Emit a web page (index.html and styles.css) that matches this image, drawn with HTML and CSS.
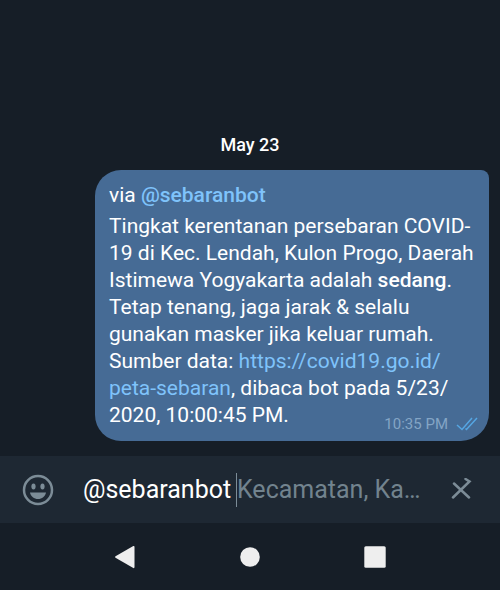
FILE: index.html
```html
<!DOCTYPE html>
<html lang="id">
<head>
<meta charset="utf-8">
<meta name="viewport" content="width=device-width, initial-scale=1">
<title>Chat</title>
<link rel="stylesheet" href="styles.css">
</head>
<body>
<main class="chat">
  <time class="date" datetime="2020-05-23">May 23</time>
  <article class="bubble">
    <p class="via">via <a class="bot" href="#sebaranbot">@sebaranbot</a></p>
    <p class="message">Tingkat kerentanan persebaran COVID-<br>19 di Kec. Lendah, Kulon Progo, Daerah<br>Istimewa Yogyakarta adalah <strong>sedang</strong>.<br>Tetap tenang, jaga jarak &amp; selalu<br>gunakan masker jika keluar rumah.<br>Sumber data: <a href="https://covid19.go.id/peta-sebaran">https://covid19.go.id/<br>peta-sebaran</a>, dibaca bot pada 5/23/<br>2020, 10:00:45 PM.</p>
    <div class="status">
      <time datetime="22:35">10:35 PM</time>
      <svg class="ticks" viewBox="0 0 22 14" aria-hidden="true"><path d="M1 8l5 4.500L16 1M9.500 11.500l1 1L21 1"/></svg>
    </div>
  </article>
</main>
<form class="composer">
  <button class="icon-button" type="button" aria-label="Emoji">
    <svg class="emoji" viewBox="0 0 32 32" aria-hidden="true">
      <circle class="face" cx="16" cy="16" r="14"/>
      <ellipse cx="11.500" cy="12.500" rx="2.100" ry="3"/>
      <ellipse cx="20.500" cy="12.500" rx="2.100" ry="3"/>
      <path d="M8 18.500h16c-.8 4-4 6.500-8 6.500s-7.200-2.500-8-6.500z"/>
    </svg>
  </button>
  <input class="entry" id="entry" type="text" value="@sebaranbot " autocomplete="off" spellcheck="false">
  <label class="hint" for="entry">Kecamatan, Ka…</label>
  <button class="icon-button" type="button" aria-label="Clear">
    <svg class="clear" viewBox="0 0 22 24" aria-hidden="true"><path d="M4 5.500L19 19.500M3 19.500L19.500 3.500L15.500 1"/></svg>
  </button>
</form>
<nav class="system">
  <button type="button" aria-label="Back"><svg viewBox="0 0 24 24" aria-hidden="true"><path d="M2.500 11.300L20.300 1q1.200-.5 1.200 1v20q0 1.500-1.200 1L2.500 12.700q-1-.7 0-1.400z"/></svg></button>
  <button type="button" aria-label="Home"><svg viewBox="0 0 24 24" aria-hidden="true"><circle cx="12" cy="12" r="9.800"/></svg></button>
  <button type="button" aria-label="Recent apps"><svg viewBox="0 0 24 24" aria-hidden="true"><rect x="1.300" y="1.300" width="21.400" height="21.400" rx="1.500"/></svg></button>
</nav>
</body>
</html>
```
FILE: styles.css
```css
* {
  box-sizing: border-box;
}

body {
  margin: 0;
  min-height: 100vh;
  display: flex;
  flex-direction: column;
  background: #161e27;
  color: #fff;
  font-family: Roboto, "Liberation Sans", sans-serif;
}

button {
  border: 0;
  padding: 0;
  background: none;
}

a {
  color: #7fc3fb;
  text-decoration: none;
}

.chat {
  flex: 1;
  display: flex;
  flex-direction: column;
  justify-content: flex-end;
  padding: 0 11px 15px 95px;
}

.date {
  align-self: center;
  margin: 0 84px 14px 0;
  font-size: 18px;
  line-height: 22px;
  font-weight: 500;
}

.bubble {
  position: relative;
  padding: 12px 14px;
  border-radius: 26px 8px 28px 26px;
  background: #466b95;
  font-size: 21px;
}

.via,
.message {
  margin: 0;
  line-height: 27px;
}

.via {
  margin-bottom: 4px;
}

.message {
  white-space: nowrap;
}

.bot,
.message strong {
  font-weight: 500;
}

.status {
  position: absolute;
  right: 11px;
  bottom: 7px;
  display: flex;
  align-items: center;
  gap: 8px;
  color: #84a5c5;
  font-size: 15px;
  line-height: 20px;
}

.ticks {
  width: 22px;
  height: 14px;
  fill: none;
  stroke: #55a6e3;
  stroke-width: 1.5;
}

.composer {
  display: flex;
  align-items: center;
  height: 67px;
  padding: 0 1px 0 0;
  background: #1e2833;
  font-size: 25px;
}

.icon-button {
  flex: 0 0 76px;
  display: flex;
  align-items: center;
  justify-content: center;
}

.emoji {
  width: 32px;
  height: 32px;
  fill: #7c8c97;
}

.face {
  fill: none;
  stroke: #7c8c97;
  stroke-width: 2.500;
}

.clear {
  width: 22px;
  height: 24px;
  fill: none;
  stroke: #7c8c97;
  stroke-width: 2.5;
  stroke-linecap: round;
}

.entry {
  flex: 0 0 160px;
  min-width: 0;
  padding: 0 0 0 7px;
  border: 0;
  outline: 0;
  background: none;
  color: #fff;
  font: inherit;
}

.hint {
  flex: 1;
  min-width: 0;
  overflow: hidden;
  white-space: nowrap;
  border-left: 1px solid #7c8c97;
  line-height: 34px;
  color: #72838e;
}

.system {
  display: grid;
  grid-template-columns: repeat(3, 1fr);
  height: 67px;
  padding: 0 62px;
}

.system button {
  display: grid;
  place-items: center;
}

.system svg {
  width: 24px;
  height: 24px;
  fill: #eee;
}
```
